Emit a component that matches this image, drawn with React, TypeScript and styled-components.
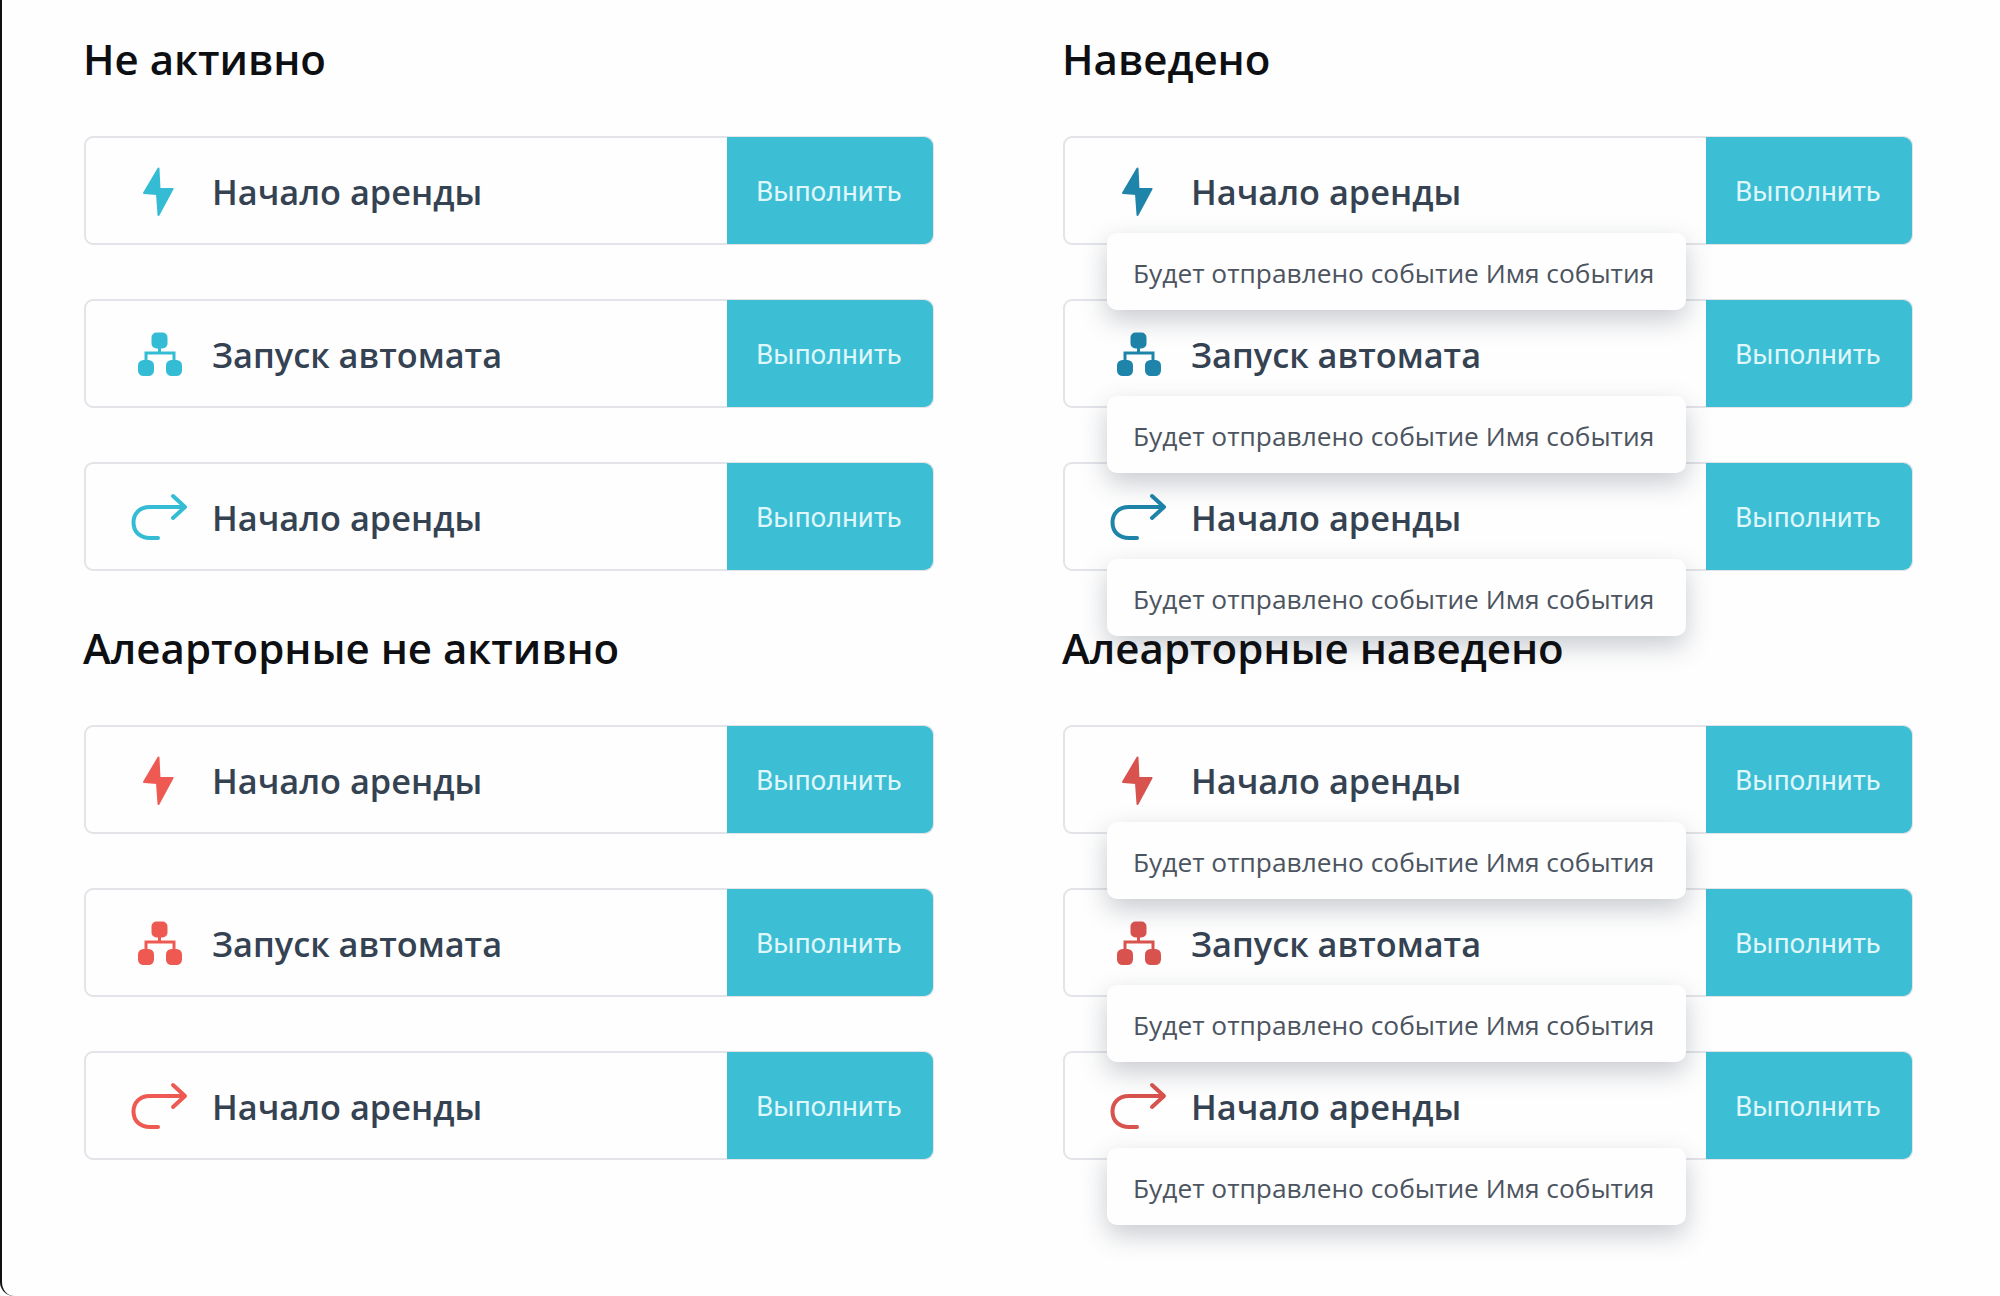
import styled, { createGlobalStyle } from 'styled-components';

const GlobalStyle = createGlobalStyle`
  html, body {
    margin: 0;
    padding: 0;
    background: #fefefe;
  }
  * {
    box-sizing: border-box;
  }
`;

const Page = styled.div`
  display: grid;
  grid-template-columns: 850px 850px;
  column-gap: 129px;
  align-content: start;
  min-height: 1296px;
  padding: 32px 0 0 82px;
  border-left: 2px solid #111;
  border-bottom-left-radius: 14px;
  font-family: 'Open Sans', sans-serif;
`;

const Section = styled.section`
  height: 589px;
`;

const Heading = styled.h2`
  position: relative;
  z-index: 2;
  margin: -1px 0 49px -1px;
  height: 56px;
  font-size: 42px;
  line-height: 56px;
  font-weight: 600;
  color: #0d0f12;
`;

const Rows = styled.div`
  display: flex;
  flex-direction: column;
  gap: 54px;
`;

const Row = styled.div`
  position: relative;
  display: flex;
  align-items: center;
  height: 109px;
  border: 2px solid #e2e4e8;
  border-radius: 9px;
`;

const IconSlot = styled.div<{ $color: string }>`
  display: flex;
  align-items: center;
  justify-content: center;
  flex: none;
  width: 58px;
  margin-left: 45px;
  color: ${(p) => p.$color};
`;

const Label = styled.span`
  flex: 1;
  margin: 2px 0 0 23px;
  font-size: 34.3px;
  font-weight: 600;
  color: #354252;
`;

const RunButton = styled.button`
  flex: none;
  align-self: stretch;
  width: 206px;
  margin: -1px -1px -1px 0;
  padding: 2px 2px 0 0;
  border: 0;
  border-radius: 0 9px 9px 0;
  background: #3cbed5;
  color: #dff6fa;
  font-family: Roboto, sans-serif;
  font-size: 27.5px;
  font-weight: 400;
`;

const Tooltip = styled.div`
  position: absolute;
  z-index: 1;
  top: 95px;
  left: 42px;
  display: flex;
  align-items: center;
  width: 579px;
  height: 77px;
  padding: 2px 0 0 26px;
  border-radius: 10px;
  background: #fefefe;
  box-shadow: 0 10px 26px rgba(48, 58, 78, 0.26);
  font-size: 26.3px;
  color: #4c5460;
  white-space: nowrap;
`;

const BoltIcon = () => (
  <svg width="34" height="50" viewBox="0 0 34 50" fill="currentColor">
    <path d="M15.5 2.5 L1 27 L14 28 L15.5 49 L29.5 23 L16.5 23 Z" stroke="currentColor" strokeWidth="2" strokeLinejoin="round" />
  </svg>
);

const TreeIcon = () => (
  <svg width="44" height="44" viewBox="0 0 44 44" fill="currentColor">
    <rect x="13.5" y="0.5" width="16" height="16" rx="5" />
    <rect x="0" y="28" width="16" height="16" rx="5.5" />
    <rect x="28" y="28" width="16" height="16" rx="5.5" />
    <path d="M21.5 14 V21 M8 30 V21 H36 V30" fill="none" stroke="currentColor" strokeWidth="3" />
  </svg>
);

const ReturnIcon = () => (
  <svg width="58" height="48" viewBox="0 0 58 48" fill="none" stroke="currentColor" strokeWidth="4" strokeLinecap="round" strokeLinejoin="round">
    <path d="M42 3 L54 14 L42 25" />
    <path d="M53 14 H19 C8 14 2.5 21 2.5 29.5 C2.5 39 9 45 19 45 H27" />
  </svg>
);

const icons = {
  bolt: <BoltIcon />,
  tree: <TreeIcon />,
  back: <ReturnIcon />,
};

const items: { icon: keyof typeof icons; label: string }[] = [
  { icon: 'bolt', label: 'Начало аренды' },
  { icon: 'tree', label: 'Запуск автомата' },
  { icon: 'back', label: 'Начало аренды' },
];

const sections = [
  { title: 'Не активно', color: '#35bcd5', hovered: false },
  { title: 'Наведено', color: '#1f84a9', hovered: true },
  { title: 'Алеарторные не активно', color: '#ee5a52', hovered: false },
  { title: 'Алеарторные наведено', color: '#d9534e', hovered: true },
];

export default function App() {
  return (
    <Page>
      <GlobalStyle />
      {sections.map((section) => (
        <Section key={section.title}>
          <Heading>{section.title}</Heading>
          <Rows>
            {items.map((item) => (
              <Row key={item.icon}>
                <IconSlot $color={section.color}>{icons[item.icon]}</IconSlot>
                <Label>{item.label}</Label>
                <RunButton>Выполнить</RunButton>
                {section.hovered && <Tooltip>Будет отправлено событие Имя события</Tooltip>}
              </Row>
            ))}
          </Rows>
        </Section>
      ))}
    </Page>
  );
}
